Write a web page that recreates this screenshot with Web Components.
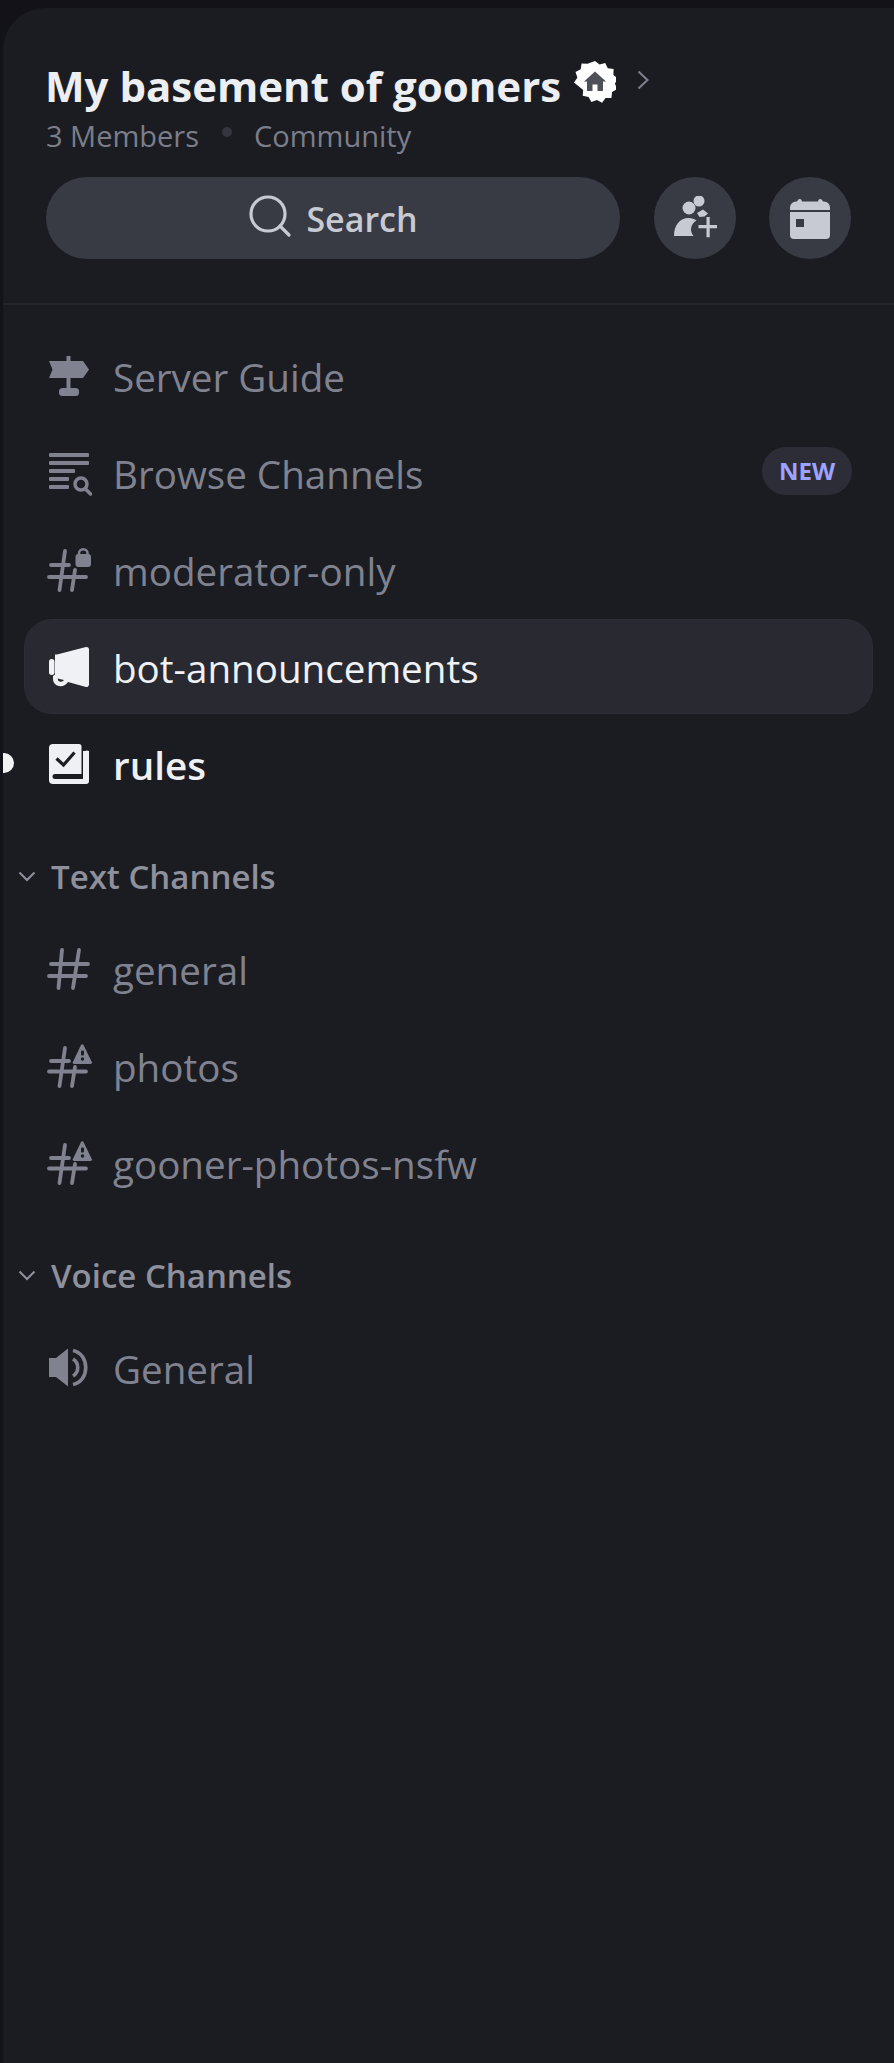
<!DOCTYPE html>
<html>
<head>
<meta charset="utf-8">
<style>
  html, body { margin: 0; padding: 0; background: #121218; }
  body { width: 894px; height: 2063px; overflow: hidden; font-family: "Open Sans", sans-serif; }
</style>
</head>
<body>
<server-panel>
  <server-header slot="header" name="My basement of gooners"></server-header>
  <channel-row icon="guide">Server Guide</channel-row>
  <channel-row icon="browse" badge="NEW">Browse Channels</channel-row>
  <channel-row icon="hash-lock">moderator-only</channel-row>
  <channel-row icon="announce" active>bot-announcements</channel-row>
  <channel-row icon="rules" unread>rules</channel-row>
  <channel-section label="Text Channels">
    <channel-row icon="hash">general</channel-row>
    <channel-row icon="hash-warn">photos</channel-row>
    <channel-row icon="hash-warn">gooner-photos-nsfw</channel-row>
  </channel-section>
  <channel-section label="Voice Channels">
    <channel-row icon="voice">General</channel-row>
  </channel-section>
</server-panel>

<script>
// icons are all drawn in a 40x40 box, overflow is allowed for the little corner glyphs
const ICONS = {
  guide: `<path fill="currentColor" d="M17.500 0h4v5H34l6 8.500L34 22H21.500v11H17.500V22H0l3.500-8.500L0 5h17.500z"/><rect fill="currentColor" x="10" y="32" width="20" height="8" rx="3.500"/>`,
  browse: `<g fill="currentColor"><rect x="0" y="0" width="40" height="4" rx="1"/><rect x="0" y="8" width="40" height="4" rx="1"/><rect x="0" y="16" width="26" height="4" rx="1"/><rect x="0" y="24" width="20" height="4" rx="1"/><rect x="0" y="32" width="20" height="4" rx="1"/></g><circle cx="32" cy="31" r="6" fill="none" stroke="currentColor" stroke-width="3.500"/><path d="M36.500 36l5 5" stroke="currentColor" stroke-width="3.500" stroke-linecap="round"/>`,
  'hash': `<path d="M13 1L9.500 39M30 1L24 39M2 15H39M0 27H37" fill="none" stroke="currentColor" stroke-width="3.800" stroke-linecap="round"/>`,
  'hash-lock': `<path d="M16 1L10.500 40M26 20L23 40M2 15H20M0 27H37" fill="none" stroke="currentColor" stroke-width="3.800" stroke-linecap="round"/><rect x="26.500" y="4" width="15.500" height="13" rx="3" fill="currentColor"/><path d="M30 5.500v-2a4.300 4.300 0 0 1 8.600 0v2" fill="none" stroke="currentColor" stroke-width="2.400"/>`,
  'hash-warn': `<path d="M16 2L10.500 40M26 21L23 40M2 15H20M0 25.500H37" fill="none" stroke="currentColor" stroke-width="3.800" stroke-linecap="round"/><path d="M34.500 -1l8.500 17.500a1.500 1.500 0 0 1-1.300 1.500H25a1.500 1.500 0 0 1-1.300-1.500L32 -1a1.400 1.400 0 0 1 2.500 0z" fill="currentColor"/><rect x="32" y="4.500" width="3" height="5" rx="1" fill="#1c1d23"/><circle cx="33.500" cy="13" r="1.700" fill="#1c1d23"/>`,
  announce: `<path fill="currentColor" d="M37.500 0A2.500 2.500 0 0 1 40 2.500v35a2.500 2.500 0 0 1-3 2.400L19 35a9 9 0 0 1-9 4 7 7 0 0 1-6-7.500V29l2-1.500V7.500h2L36 .3z"/><rect fill="currentColor" x="0" y="12" width="5.500" height="16" rx="2.700"/><path d="M8.500 31.500a3.500 3.500 0 0 0 6.500 1.500z" fill="#282931"/>`,
  rules: `<path fill="currentColor" fill-rule="evenodd" d="M4 0h26a2.500 2.500 0 0 1 2.500 2.500V30H6a2.500 2.500 0 0 0 0 5h28V7h2a4 4 0 0 1 4 0v30a3 3 0 0 1-3 3H4a4 4 0 0 1-4-4V4a4 4 0 0 1 4-4z"/><path d="M7.500 14.500L14.500 21 25.500 8.500" fill="none" stroke="#1c1d23" stroke-width="3.200"/>`,
  voice: `<path fill="currentColor" d="M0 10h7L19 0.500v38L7 29H0z"/><path d="M24 11a10 10 0 0 1 0 17M24 2.500C41 6 41 33 24 36.500" fill="none" stroke="currentColor" stroke-width="3.600"/>`
};

class ServerPanel extends HTMLElement {
  constructor() {
    super();
    this.attachShadow({ mode: 'open' });
    this.shadowRoot.innerHTML = `
      <style>
        :host {
          display: block;
          box-sizing: border-box;
          margin: 8px 0 0 3px;
          height: 2055px;
          background: #1b1c22;
          border-top-left-radius: 42px;
        }
        .list { padding-top: 22px; }
      </style>
      <slot name="header"></slot>
      <div class="list"><slot></slot></div>
    `;
  }
}

class ServerHeader extends HTMLElement {
  constructor() {
    super();
    this.attachShadow({ mode: 'open' });
  }
  connectedCallback() {
    this.shadowRoot.innerHTML = `
      <style>
        :host {
          display: block;
          box-sizing: border-box;
          height: 297px;
          padding: 50px 43px 0 43px;
          border-bottom: 2px solid #24252b;
        }
        .title { display: flex; align-items: center; height: 56px; }
        h1 { margin: 0 0 0 -1px; font: 700 42px/56px "Open Sans", sans-serif; color: #eceef1; white-space: nowrap; }
        .star { width: 42px; height: 42px; margin: -8px 0 0 13px; flex: none; }
        .more { width: 12px; height: 20px; margin: -12px 0 0 21px; flex: none; }
        .sub { display: flex; align-items: center; height: 36px; margin-top: 4px; color: #7b7e89; font: 400 29px/36px "Open Sans", sans-serif; }
        .sub i { width: 10px; height: 10px; border-radius: 50%; background: #35363d; margin: -8px 22px 0 23px; }
        .actions { display: flex; align-items: center; margin-top: 23px; }
        .search {
          flex: none; width: 574px; height: 82px; border-radius: 41px; background: #383a44;
          display: flex; align-items: center; justify-content: center; gap: 14px;
          color: #c7c9d3; font: 600 34px/40px "Open Sans", sans-serif;
        }
        .search span { margin-top: 2px; }
        .search svg { width: 44px; height: 44px; margin-top: -4px; }
        .round {
          flex: none; width: 82px; height: 82px; border-radius: 50%; background: #383a44;
          display: flex; align-items: center; justify-content: center; margin-left: 34px; color: #c7c9d3;
        }
        .round + .round { margin-left: 33px; }
      </style>
      <div class="title">
        <h1>${this.getAttribute('name')}</h1>
        <svg class="star" viewBox="0 0 42 42">
          <path fill="#fff" d="M21 0l4.600 3.600 5.600-1.700 2.600 5.300 5.800.9-.2 5.900 4.600 3.600-3.100 5 2.200 5.400-5 3.100-.7 5.800-5.900.1-3.400 4.800-5.200-2.700-5.500 2-2.900-5.100-5.800-1.200.5-5.900L0 21.400l3.400-4.800-1.900-5.500 5.200-2.800.9-5.800 5.900.2z"/>
          <path fill="#4e5058" d="M21 10.500l11 10h-3v9.500h-5.500v-6.500h-5V30H13v-9.500h-3z"/>
        </svg>
        <svg class="more" viewBox="0 0 12 20"><path d="M1.500 1.500L10.500 10 1.500 18.500" fill="none" stroke="#7b7e89" stroke-width="2.200"/></svg>
      </div>
      <div class="sub"><span>3 Members</span><i></i><span>Community</span></div>
      <div class="actions">
        <div class="search">
          <svg viewBox="0 0 44 44"><circle cx="20" cy="20" r="17" fill="none" stroke="currentColor" stroke-width="3.200"/><path d="M32 32l9 9" stroke="currentColor" stroke-width="3.200" stroke-linecap="round"/></svg>
          <span>Search</span>
        </div>
        <div class="round">
          <svg width="44" height="44" viewBox="0 0 44 44" fill="currentColor">
            <circle cx="16" cy="12" r="6.500"/>
            <path d="M1 40c0-11 6-18 14.500-18 3.500 0 6 1 8 2.500A10 10 0 0 0 20.500 40z"/>
            <circle cx="26" cy="5" r="5.500"/>
            <path d="M24 17l6-3.500 5 4-3.500 3-5 .5z"/>
            <path d="M33.500 21h3.200v8h8v3.200h-8v9h-3.200v-9h-8V29h8z"/>
          </svg>
        </div>
        <div class="round">
          <svg width="40" height="42" viewBox="0 0 40 42">
            <path fill="currentColor" d="M8 3a2 2 0 0 1 3.500 0l.5 1.500h16L28.500 3A2 2 0 0 1 32 3l1 1.500h1a6 6 0 0 1 6 6V13H0v-2.500a6 6 0 0 1 6-6h1z"/>
            <path fill="currentColor" d="M0 15h40v23a4 4 0 0 1-4 4H4a4 4 0 0 1-4-4z"/>
            <rect x="6" y="22" width="8" height="8" fill="#383a44"/>
          </svg>
        </div>
      </div>
    `;
  }
}

class ChannelRow extends HTMLElement {
  constructor() {
    super();
    this.attachShadow({ mode: 'open' });
  }
  connectedCallback() {
    const badge = this.getAttribute('badge');
    this.shadowRoot.innerHTML = `
      <style>
        :host {
          display: flex;
          align-items: center;
          box-sizing: border-box;
          position: relative;
          height: 97px;
          margin: 0 21px 0 21px;
          padding: 0 21px 0 25px;
          color: #80838f;
          font: 400 38.600px/50px "Open Sans", sans-serif;
        }
        :host([active]) { color: #f0f1f4; }
        :host([active])::before {
          content: "";
          position: absolute;
          left: 0; right: 0;
          top: 1px; height: 95px;
          box-sizing: border-box;
          background: #282931;
          border: 1px solid #2c2d35;
          border-radius: 28px;
        }
        :host([unread]) { color: #eff0f3; font-weight: 600; }
        .unread {
          position: absolute; left: -21px; top: 38px;
          width: 11px; height: 20px; background: #f2f3f5;
          border-radius: 0 10px 10px 0;
        }
        svg { position: relative; width: 40px; height: 40px; flex: none; overflow: visible; }
        .label { position: relative; margin-left: 24px; flex: 1; white-space: nowrap; margin-top: 2px; }
        .badge {
          position: relative; flex: none; height: 48px; width: 90px; border-radius: 24px; background: #2c2d36;
          display: flex; align-items: center; justify-content: center;
          color: #9da1ff; font: 700 24px/30px "Open Sans", sans-serif; margin-top: -3px;
        }
      </style>
      ${this.hasAttribute('unread') ? '<span class="unread"></span>' : ''}
      <svg viewBox="0 0 40 40">${ICONS[this.getAttribute('icon')] || ''}</svg>
      <span class="label"><slot></slot></span>
      ${badge ? `<span class="badge">${badge}</span>` : ''}
    `;
  }
}

class ChannelSection extends HTMLElement {
  constructor() {
    super();
    this.attachShadow({ mode: 'open' });
  }
  connectedCallback() {
    this.shadowRoot.innerHTML = `
      <style>
        :host { display: block; }
        .head {
          display: flex; align-items: center; height: 108px; box-sizing: border-box;
          padding: 21px 0 0 15px; color: #8e909c;
          font: 600 33px/38px "Open Sans", sans-serif;
        }
        svg { width: 18px; height: 11px; flex: none; }
        span { margin-left: 15px; white-space: nowrap; }
      </style>
      <div class="head">
        <svg viewBox="0 0 18 11"><path d="M1.500 1.500L9 9l7.500-7.500" fill="none" stroke="currentColor" stroke-width="2"/></svg>
        <span>${this.getAttribute('label')}</span>
      </div>
      <slot></slot>
    `;
  }
}

customElements.define('server-panel', ServerPanel);
customElements.define('server-header', ServerHeader);
customElements.define('channel-row', ChannelRow);
customElements.define('channel-section', ChannelSection);
</script>
</body>
</html>
